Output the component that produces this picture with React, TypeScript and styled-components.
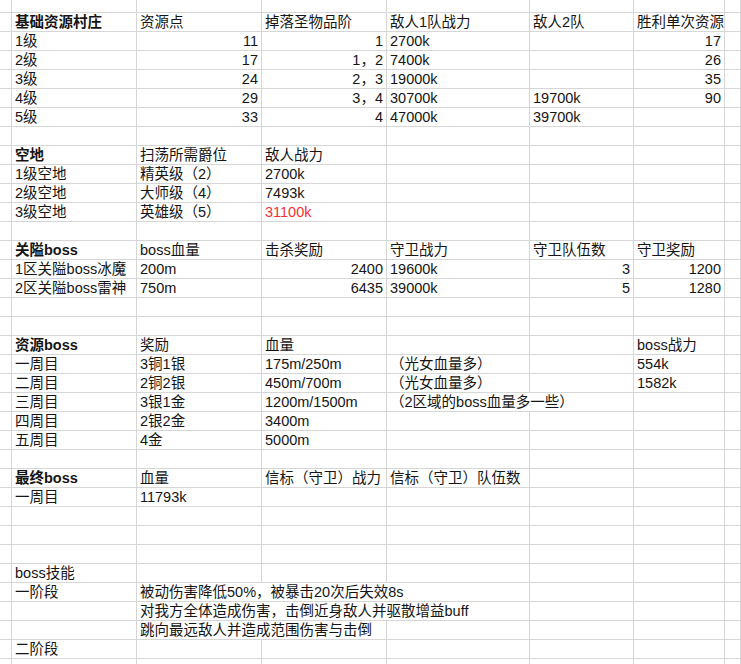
import React from 'react';
import styled, { createGlobalStyle } from 'styled-components';

const GlobalStyle = createGlobalStyle`
  html, body {
    margin: 0;
    padding: 0;
    background: #ffffff;
    overflow: hidden;
  }
  body {
    font-family: "Liberation Sans", "Noto Sans CJK SC", sans-serif;
  }
`;

const COLS = '12px 125px 125px 125px 143px 104px 91px 1fr';

const Sheet = styled.div`
  width: 741px;
  height: 664px;
  overflow: hidden;
  background: #fff;
`;

const Row = styled.div<{ $h: number }>`
  display: grid;
  grid-template-columns: ${COLS};
  height: ${({ $h }) => $h}px;
`;

const Cell = styled.div<{ $span: number; $right?: boolean; $bold?: boolean; $red?: boolean }>`
  grid-column: span ${({ $span }) => $span};
  box-sizing: border-box;
  border-right: 1px solid #d6d6d6;
  border-bottom: 1px solid #d6d6d6;
  display: flex;
  align-items: flex-end;
  justify-content: ${({ $right }) => ($right ? 'flex-end' : 'flex-start')};
  padding: 0 3px 0 3px;
  font-size: 14.5px;
  line-height: 17px;
  white-space: nowrap;
  overflow: visible;
  color: ${({ $red }) => ($red ? '#f03232' : '#151515')};
  font-weight: ${({ $bold }) => ($bold ? 700 : 400)};
  min-width: 0;
`;

type Spec = { t: string; r?: boolean; b?: boolean; red?: boolean; span?: number } | string | null;

const n = (t: string): Spec => ({ t, r: true });
const h = (t: string): Spec => ({ t, b: true });

// columns B..G (A and H are always empty)
const rows: Spec[][] = [
  [h('基础资源村庄'), '资源点', '掉落圣物品阶', '敌人1队战力', '敌人2队', '胜利单次资源'],
  ['1级', n('11'), n('1'), '2700k', null, n('17')],
  ['2级', n('17'), n('1，2'), '7400k', null, n('26')],
  ['3级', n('24'), n('2，3'), '19000k', null, n('35')],
  ['4级', n('29'), n('3，4'), '30700k', '19700k', n('90')],
  ['5级', n('33'), n('4'), '47000k', '39700k', null],
  [],
  [h('空地'), '扫荡所需爵位', '敌人战力'],
  ['1级空地', '精英级（2）', '2700k'],
  ['2级空地', '大师级（4）', '7493k'],
  ['3级空地', '英雄级（5）', { t: '31100k', red: true }],
  [],
  [h('关隘boss'), 'boss血量', '击杀奖励', '守卫战力', '守卫队伍数', '守卫奖励'],
  ['1区关隘boss冰魔', '200m', n('2400'), '19600k', n('3'), n('1200')],
  ['2区关隘boss雷神', '750m', n('6435'), '39000k', n('5'), n('1280')],
  [],
  [],
  [h('资源boss'), '奖励', '血量', null, null, 'boss战力'],
  ['一周目', '3铜1银', '175m/250m', '（光女血量多）', null, '554k'],
  ['二周目', '2铜2银', '450m/700m', '（光女血量多）', null, '1582k'],
  ['三周目', '3银1金', '1200m/1500m', { t: '（2区域的boss血量多一些）', span: 2 }, null],
  ['四周目', '2银2金', '3400m'],
  ['五周目', '4金', '5000m'],
  [],
  [h('最终boss'), '血量', '信标（守卫）战力', '信标（守卫）队伍数'],
  ['一周目', '11793k'],
  [],
  [],
  [],
  ['boss技能'],
  ['一阶段', { t: '被动伤害降低50%，被暴击20次后失效8s', span: 3 }],
  [null, { t: '对我方全体造成伤害，击倒近身敌人并驱散增益buff', span: 3 }],
  [null, { t: '跳向最远敌人并造成范围伤害与击倒', span: 2 }],
  ['二阶段'],
];

function renderRow(specs: Spec[], key: number) {
  const out: React.ReactNode[] = [<Cell key="a" $span={1} />];
  let col = 0;
  while (col < 6) {
    const s = specs[col] ?? null;
    const obj = typeof s === 'string' ? { t: s } : s;
    const span = obj?.span ?? 1;
    out.push(
      <Cell key={col} $span={span} $right={obj?.r} $bold={obj?.b} $red={obj?.red}>
        {obj?.t}
      </Cell>
    );
    col += span;
  }
  out.push(<Cell key="h" $span={1} />);
  return (
    <Row key={key} $h={19}>
      {out}
    </Row>
  );
}

function EmptyRow({ height }: { height: number }) {
  return (
    <Row $h={height}>
      {Array.from({ length: 8 }).map((_, i) => (
        <Cell key={i} $span={1} />
      ))}
    </Row>
  );
}

export default function App() {
  return (
    <>
      <GlobalStyle />
      <Sheet>
        <EmptyRow height={13} />
        {rows.map((r, i) => renderRow(r, i))}
        <EmptyRow height={19} />
      </Sheet>
    </>
  );
}
